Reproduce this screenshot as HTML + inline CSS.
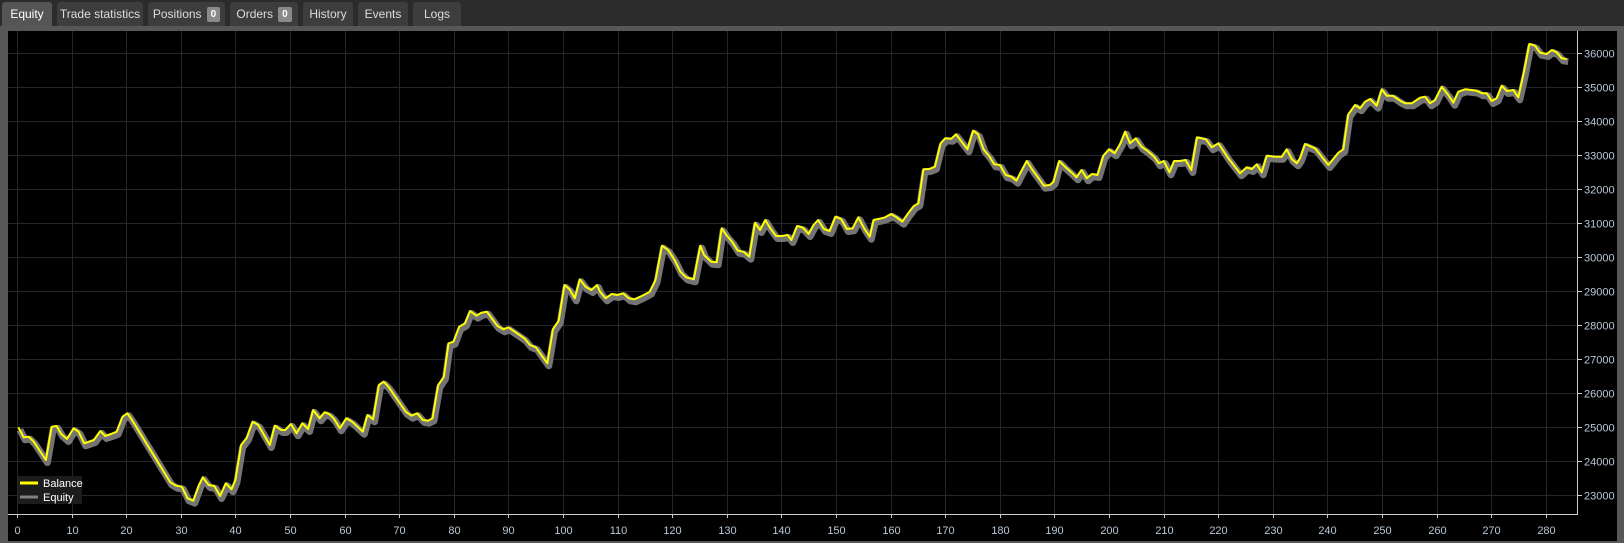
<!DOCTYPE html>
<html><head><meta charset="utf-8"><style>
html,body{margin:0;padding:0;background:#2e2e2e;width:1624px;height:543px;overflow:hidden;font-family:"Liberation Sans",Arial,sans-serif}
.tabs{position:absolute;left:0;top:0;width:1624px;height:26px;background:#2b2b2b}
.tab{position:absolute;top:2px;height:24px;background:#3d3d3d;color:#ddd;font-size:12px;line-height:25px;text-align:center;border-radius:3px 3px 0 0}
.tab.act{background:#555;color:#fff}
.b{display:inline-block;background:#8a8a8a;color:#fff;font-size:10px;font-weight:bold;line-height:15px;padding:0 4px;border-radius:2px;margin-left:5px;vertical-align:1px}
.panel{position:absolute;left:0;top:26px;width:1624px;height:517px;background:#575757}
svg{position:absolute;left:0;top:0}
</style></head><body>
<div class="tabs">
<div class="tab act" style="left:2px;width:50px">Equity</div>
<div class="tab" style="left:57px;width:86px">Trade statistics</div>
<div class="tab" style="left:148px;width:77px">Positions<span class="b">0</span></div>
<div class="tab" style="left:230px;width:68px">Orders<span class="b">0</span></div>
<div class="tab" style="left:303px;width:50px">History</div>
<div class="tab" style="left:358px;width:50px">Events</div>
<div class="tab" style="left:413px;width:48px">Logs</div>
</div>
<div class="panel"></div>
<svg width="1624" height="543" xmlns="http://www.w3.org/2000/svg" font-family="Liberation Sans, Arial, sans-serif">
<rect x="8" y="31" width="1609" height="510" fill="#000"/>
<g stroke="#262626" stroke-width="1" id="grid"></g>
<g id="ticks" fill="#b8c8d8" font-size="11"></g>
<line x1="1577.5" y1="31" x2="1577.5" y2="514" stroke="#ccc"/>
<line x1="8" y1="514.5" x2="1578" y2="514.5" stroke="#ccc"/>
<polyline id="eq" fill="none" stroke="#747474" stroke-width="7" stroke-linejoin="round"/>
<polyline id="bal" fill="none" stroke="#ffff00" stroke-width="2" stroke-linejoin="round"/>
<rect x="18" y="476" width="64" height="28" fill="#1c1c1c"/>
<line x1="20" y1="483" x2="38" y2="483" stroke="#ffff00" stroke-width="3"/>
<line x1="20" y1="497" x2="38" y2="497" stroke="#808080" stroke-width="3"/>
<text x="43" y="487" fill="#fff" font-size="11">Balance</text>
<text x="43" y="501" fill="#fff" font-size="11">Equity</text>
</svg>
<script>
var ns="http://www.w3.org/2000/svg",g=document.getElementById('grid'),t=document.getElementById('ticks');
function el(p,n,a,txt){var e=document.createElementNS(ns,n);for(var k in a)e.setAttribute(k,a[k]);if(txt)e.textContent=txt;p.appendChild(e);}
for(var i=0;i<=28;i++){var x=17+i*54.6;x=Math.round(x)+.5;el(g,'line',{x1:x,y1:31,x2:x,y2:514});el(t,'line',{x1:x,y1:514,x2:x,y2:518,stroke:'#ccc'});el(t,'text',{x:x,y:534,'text-anchor':'middle'},String(i*10));}
for(var v=23000;v<=36000;v+=1000){var y=Math.round(495-(v-23000)*0.034)+.5;el(g,'line',{x1:8,y1:y,x2:1577,y2:y});el(t,'line',{x1:1577,y1:y,x2:1582,y2:y,stroke:'#ccc'});el(t,'text',{x:1584,y:y+4},String(v));}
var A=[[48,532],[62,562],[75,560],[88,575],[120,630],[135,530],[148,528],[160,552],[175,567],[192,535],[205,545],[220,580],[245,570],[262,543],[275,558],[290,552],[305,545],[320,500],[333,490],[345,510],[420,650],[445,697],[460,707],[475,710],[490,745],[505,752],[520,705],[530,682],[545,705],[560,708],[575,738],[590,700],[605,718],[615,690],[630,585],[645,563],[660,515],[675,525],[705,585],[718,527],[735,540],[745,540],[760,522],[775,550],[790,520],[805,537],[818,480],[835,505],[848,487],[860,492],[872,505],[888,535],[905,505],[920,515],[948,545],[960,495],[975,508],[990,405],[1002,395],[1015,410],[1060,485],[1075,497],[1090,490],[1105,510],[1118,512],[1130,505],[1145,405],[1160,380],[1172,280],[1185,275],[1200,230],[1215,220],[1228,183],[1245,197],[1258,188],[1272,185],[1300,228],[1315,238],[1328,232],[1345,245],[1370,265],[1385,285],[1400,292],[1430,340],[1445,237],[1460,212],[1475,105],[1488,118],[1502,145],[1515,88],[1530,110],[1545,120],[1560,105]];
var B=[[0,575],[15,595],[30,582],[45,585],[60,580],[75,595],[90,598],[105,590],[130,575],[145,540],[162,437],[178,450],[195,480],[210,515],[225,532],[245,538],[262,437],[272,465],[290,485],[305,487],[318,385],[330,405],[345,425],[360,452],[375,455],[390,470],[405,368],[418,390],[432,360],[445,385],[460,408],[475,408],[490,405],[500,420],[515,378],[530,383],[545,402],[558,375],[570,360],[585,387],[600,393],[615,350],[630,357],[645,387],[660,385],[675,352],[690,385],[705,410],[715,360],[735,355],[745,352],[760,342],[775,352],[790,365],[805,340],[820,318],[832,310],[845,208],[860,207],[875,200],[890,130],[902,115],[918,116],[930,103],[945,125],[960,148],[975,92],[988,103],[1002,148],[1018,170],[1030,193],[1045,195],[1060,225],[1075,230],[1088,242],[1100,215],[1115,183],[1130,210],[1145,233],[1160,257],[1175,255],[1185,245],[1200,183],[1215,200],[1230,215],[1245,232],[1258,210],[1272,235],[1285,222],[1300,225],[1315,167],[1330,148],[1345,160],[1360,130],[1372,95],[1385,130],[1400,115],[1415,140],[1430,152],[1448,170],[1460,190],[1473,183],[1488,217],[1500,183],[1515,183],[1530,180],[1545,210],[1560,112]];
var C=[[318,298],[335,322],[355,310],[385,355],[420,400],[440,382],[455,387],[470,373],[485,397],[500,347],[525,350],[545,350],[560,328],[575,357],[590,370],[600,355],[615,312],[645,325],[685,375],[715,338],[730,328],[745,223],[765,195],[780,205],[795,185],[810,177],[830,197],[845,148],[860,167],[878,167],[900,182],[915,190],[935,190],[960,173],[975,170],[990,190],[1005,180],[1025,140],[1045,165],[1060,188],[1075,155],[1095,148],[1130,152],[1145,160],[1160,160],[1175,183],[1190,175],[1205,137],[1220,153],[1240,150],[1255,172],[1272,95],[1288,12],[1305,17],[1320,38],[1340,42],[1355,30],[1370,37],[1385,55],[1400,57]];
var P=[];
A.forEach(function(p){P.push([p[0]/2.613,250+p[1]/3]);});
B.forEach(function(p){P.push([600+p[0]/2.613,100+p[1]/3]);});
C.forEach(function(p){P.push([1100+p[0]/3,40+p[1]/3]);});
var b=P.map(function(p){return p[0].toFixed(1)+','+p[1].toFixed(1)}).join(' ');
var e=P.map(function(p,i){return (p[0]+1.5).toFixed(1)+','+(p[1]+2.5).toFixed(1)}).join(' ');
document.getElementById('bal').setAttribute('points',b);
document.getElementById('eq').setAttribute('points',e);
</script>
</body></html>
